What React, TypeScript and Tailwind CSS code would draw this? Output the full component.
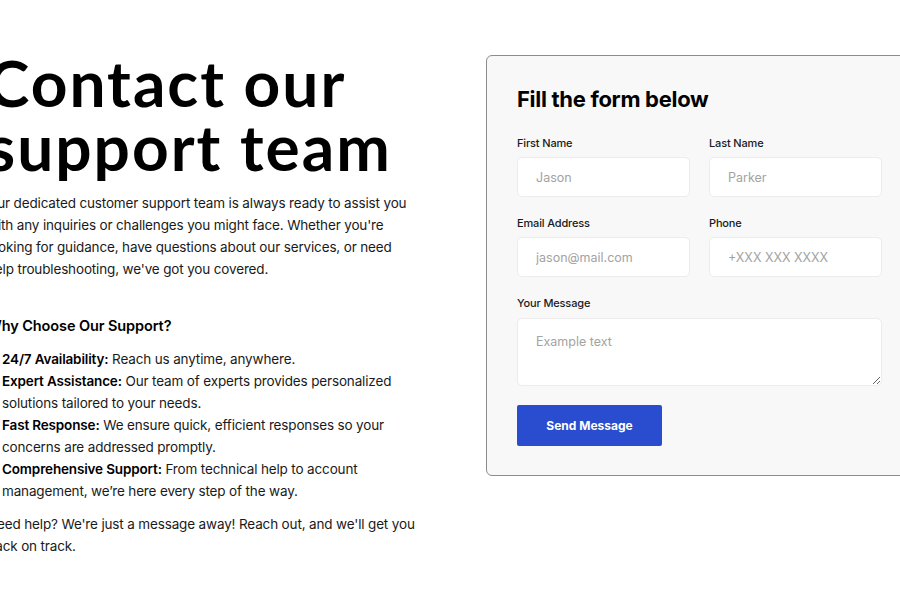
import React from "react";

const inter = { fontFamily: "Inter, 'Liberation Sans', sans-serif" };

function Field({ label, placeholder }: { label: string; placeholder: string }) {
  return (
    <div className="flex flex-col">
      <label className="text-[11px] leading-[15px] font-medium tracking-[-0.15px] text-[#1a1a1a]">{label}</label>
      <input
        placeholder={placeholder}
        className="mt-[6px] h-[40px] w-full rounded-[5px] border border-[#ececec] bg-white px-[18px] text-[12.5px] text-[#222] placeholder:text-[#a3a3a3] outline-none"
      />
    </div>
  );
}

export default function App() {
  return (
    <div className="w-[900px] h-[600px] overflow-hidden bg-white" style={inter}>
      <div className="flex ml-[-13px]">
        <div className="w-[499px] shrink-0 pt-[51px]">
          <h1
            className="text-[64px] leading-[64px] font-bold text-black tracking-[2px]"
            style={{ fontFamily: "Lato, 'Open Sans', sans-serif" }}
          >
            Contact our
            <br />
            support team
          </h1>
          <div className="w-[431px] text-[13.5px] leading-[22px] tracking-[-0.15px] text-[#1a1a1a]">
            <p className="mt-[13px]">
              Our dedicated customer support team is always ready to assist you with any inquiries or challenges you
              might face. Whether you're looking for guidance, have questions about our services, or need help
              troubleshooting, we've got you covered.
            </p>
            <h2 className="mt-[34px] text-[14.5px] leading-[24px] font-semibold tracking-[-0.1px] text-black">
              Why Choose Our Support?
            </h2>
            <ul className="mt-[10px] pl-[15px]">
              <li>
                <span className="font-semibold text-black">24/7 Availability:</span> Reach us anytime, anywhere.
              </li>
              <li>
                <span className="font-semibold text-black">Expert Assistance:</span> Our team of experts provides
                personalized solutions tailored to your needs.
              </li>
              <li>
                <span className="font-semibold text-black">Fast Response:</span> We ensure quick, efficient responses so
                your concerns are addressed promptly.
              </li>
              <li>
                <span className="font-semibold text-black">Comprehensive Support:</span> From technical help to account
                management, we’re here every step of the way.
              </li>
            </ul>
            <p className="mt-[11px]">
              Need help? We're just a message away! Reach out, and we'll get you back on track.
            </p>
          </div>
        </div>
        <div className="mt-[55px] w-[427px] shrink-0 self-start rounded-[6px] border border-[#8c8c8c] bg-[#f8f8f8] px-[30px] pt-[29px] pb-[29px]">
          <h3 className="text-[22px] leading-[28px] font-bold tracking-[-0.3px] text-black">Fill the form below</h3>
          <div className="mt-[23px] grid grid-cols-2 gap-x-[19px] gap-y-[19px]">
            <Field label="First Name" placeholder="Jason" />
            <Field label="Last Name" placeholder="Parker" />
            <Field label="Email Address" placeholder="jason@mail.com" />
            <Field label="Phone" placeholder="+XXX XXX XXXX" />
            <div className="col-span-2 flex flex-col">
              <label className="text-[11px] leading-[15px] font-medium tracking-[-0.15px] text-[#1a1a1a]">
                Your Message
              </label>
              <textarea
                placeholder="Example text"
                className="mt-[7px] h-[68px] w-full rounded-[5px] border border-[#ececec] bg-white px-[18px] pt-[14px] pb-[10px] text-[12.5px] leading-[18px] placeholder:text-[#a3a3a3] outline-none"
              />
            </div>
          </div>
          <button className="mt-[19px] h-[41px] w-[145px] rounded-[2px] bg-[#2a4dd0] text-[12px] font-bold text-white">
            Send Message
          </button>
        </div>
      </div>
    </div>
  );
}
